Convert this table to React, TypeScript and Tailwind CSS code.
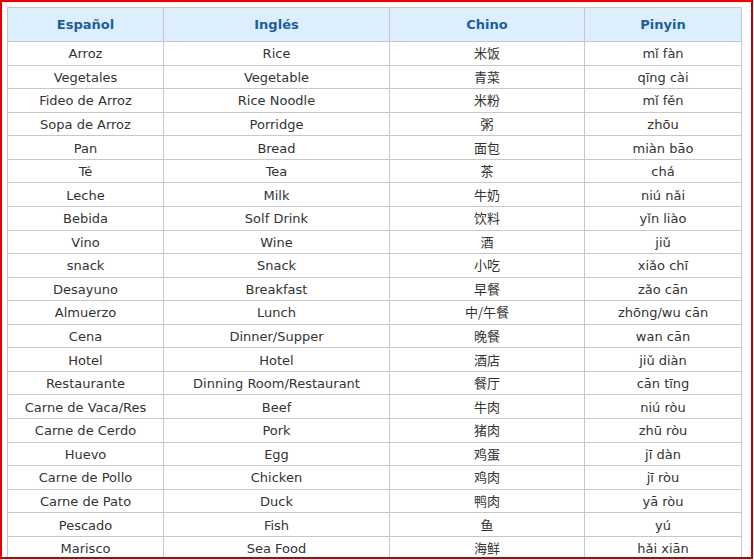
import React from "react";

const rows: [string, string, string, string][] = [
  ["Arroz", "Rice", "米饭", "mǐ fàn"],
  ["Vegetales", "Vegetable", "青菜", "qīng cài"],
  ["Fideo de Arroz", "Rice Noodle", "米粉", "mǐ fěn"],
  ["Sopa de Arroz", "Porridge", "粥", "zhōu"],
  ["Pan", "Bread", "面包", "miàn bāo"],
  ["Té", "Tea", "茶", "chá"],
  ["Leche", "Milk", "牛奶", "niú nǎi"],
  ["Bebida", "Solf Drink", "饮料", "yǐn liào"],
  ["Vino", "Wine", "酒", "jiǔ"],
  ["snack", "Snack", "小吃", "xiǎo chī"],
  ["Desayuno", "Breakfast", "早餐", "zǎo cān"],
  ["Almuerzo", "Lunch", "中/午餐", "zhōng/wu cān"],
  ["Cena", "Dinner/Supper", "晚餐", "wan cān"],
  ["Hotel", "Hotel", "酒店", "jiǔ diàn"],
  ["Restaurante", "Dinning Room/Restaurant", "餐厅", "cān tīng"],
  ["Carne de Vaca/Res", "Beef", "牛肉", "niú ròu"],
  ["Carne de Cerdo", "Pork", "猪肉", "zhū ròu"],
  ["Huevo", "Egg", "鸡蛋", "jī dàn"],
  ["Carne de Pollo", "Chicken", "鸡肉", "jī ròu"],
  ["Carne de Pato", "Duck", "鸭肉", "yā ròu"],
  ["Pescado", "Fish", "鱼", "yú"],
  ["Marisco", "Sea Food", "海鲜", "hǎi xiān"],
];

const headers = ["Español", "Inglés", "Chino", "Pinyin"];

export default function App() {
  return (
    <div className="w-[754px] h-[560px] overflow-hidden bg-white">
      <div
        className="w-[753px] h-[559px] border-2 border-[#e60000] border-r-[#c00000] border-b-[#c00000] pt-[5px] pl-[5px] overflow-hidden"
        style={{ fontFamily: '"DejaVu Sans", "Noto Sans CJK SC", sans-serif' }}
      >
        <table className="border-collapse w-[734px] table-fixed text-[13px] text-[#333]">
          <colgroup>
            <col className="w-[156px]" />
            <col className="w-[226px]" />
            <col className="w-[195px]" />
            <col className="w-[157px]" />
          </colgroup>
          <thead>
            <tr className="h-[34px] bg-[#ddeeff]">
              {headers.map((h) => (
                <th
                  key={h}
                  className="border border-[#c8c8c8] text-[#1b5e9c] font-bold text-center p-0"
                >
                  {h}
                </th>
              ))}
            </tr>
          </thead>
          <tbody>
            {rows.map((r, i) => (
              <tr key={i} className="h-[23.57px]">
                {r.map((c, j) =>
                  j === 2 ? (
                    <td
                      key={j}
                      className="border border-[#c8c8c8] text-center p-0 leading-[16px] font-['Noto_Sans_CJK_SC',sans-serif]"
                    >
                      {c}
                    </td>
                  ) : (
                    <td
                      key={j}
                      className="border border-[#c8c8c8] text-center p-0 pt-[2px] leading-[16px]"
                    >
                      {c}
                    </td>
                  )
                )}
              </tr>
            ))}
          </tbody>
        </table>
      </div>
    </div>
  );
}
